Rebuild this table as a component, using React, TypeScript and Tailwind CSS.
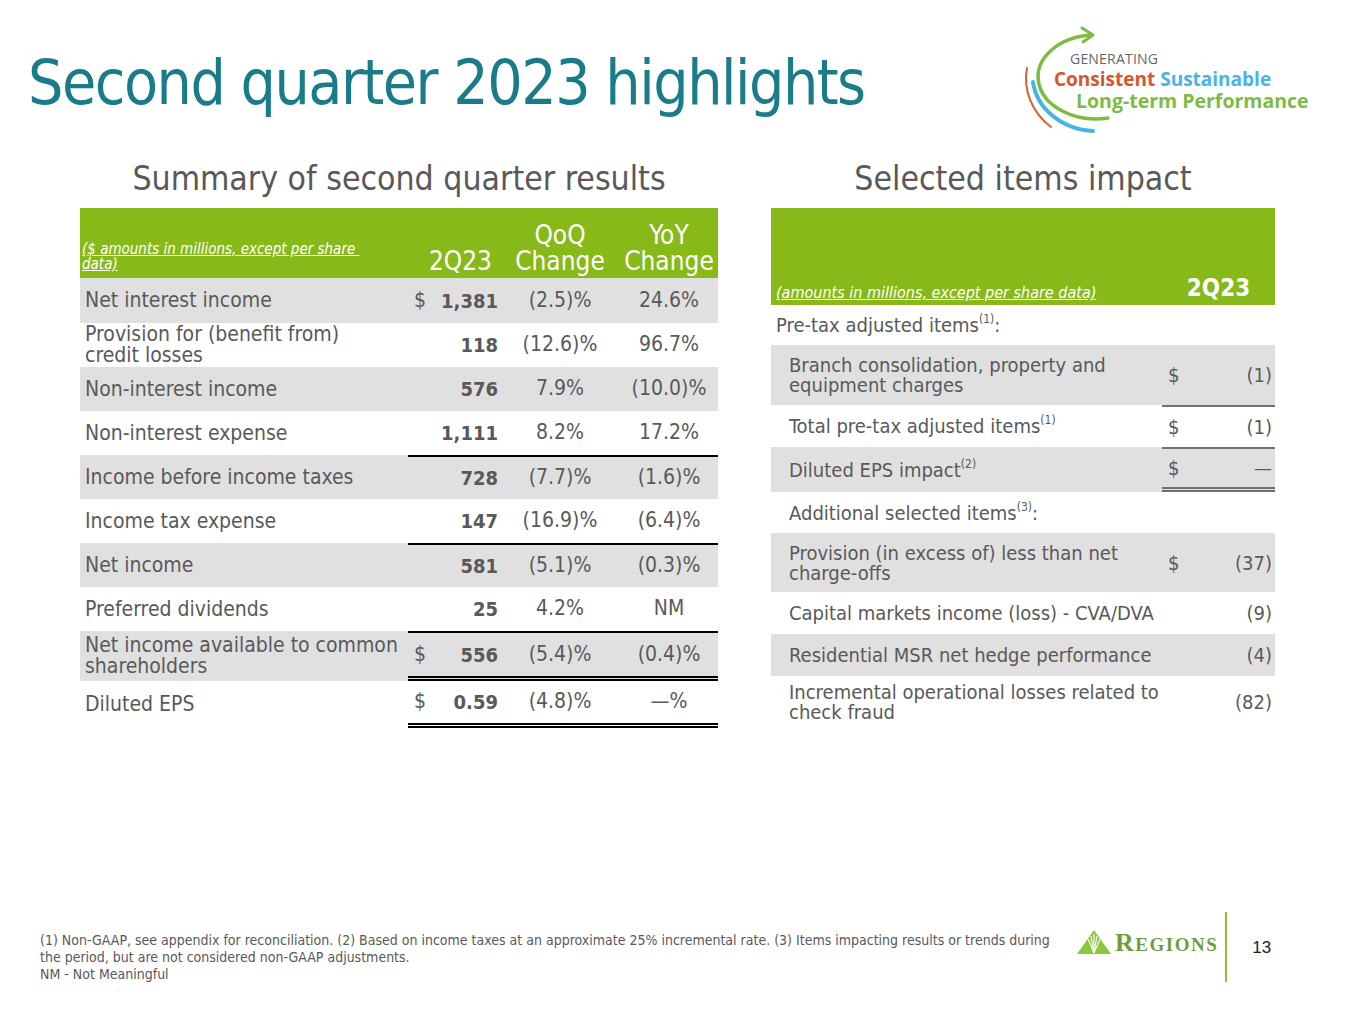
import React from "react";

const G = "text-[#595959]";

type LRow = {
  label: React.ReactNode;
  dollar?: boolean;
  v: string;
  q: string;
  y: string;
  gray: boolean;
  top?: boolean;
  dbl?: boolean;
  h: string;
};

const leftRows: LRow[] = [
  { label: "Net interest income", dollar: true, v: "1,381", q: "(2.5)%", y: "24.6%", gray: true, h: "h-[45px]" },
  { label: <>Provision for (benefit from)<br />credit losses</>, v: "118", q: "(12.6)%", y: "96.7%", gray: false, h: "h-[44px]" },
  { label: "Non-interest income", v: "576", q: "7.9%", y: "(10.0)%", gray: true, h: "h-[44px]" },
  { label: "Non-interest expense", v: "1,111", q: "8.2%", y: "17.2%", gray: false, h: "h-[44px]" },
  { label: "Income before income taxes", v: "728", q: "(7.7)%", y: "(1.6)%", gray: true, top: true, h: "h-[44px]" },
  { label: "Income tax expense", v: "147", q: "(16.9)%", y: "(6.4)%", gray: false, h: "h-[44px]" },
  { label: "Net income", v: "581", q: "(5.1)%", y: "(0.3)%", gray: true, top: true, h: "h-[44px]" },
  { label: "Preferred dividends", v: "25", q: "4.2%", y: "NM", gray: false, h: "h-[44px]" },
  { label: <>Net income available to common<br />shareholders</>, dollar: true, v: "556", q: "(5.4)%", y: "(0.4)%", gray: true, top: true, dbl: true, h: "h-[50px]" },
  { label: "Diluted EPS", dollar: true, v: "0.59", q: "(4.8)%", y: "—%", gray: false, dbl: true, h: "h-[47px]" },
];

function LeftTable() {
  return (
    <div className="w-[638px]">
      <div className="h-[70px] bg-[#87b919] flex items-end text-white">
        <div className="w-[328px] pl-[2px] pb-[6px] text-[15px] leading-[15px] italic underline">
          ($ amounts in millions, except per share&nbsp;<br />data)
        </div>
        <div className="w-[92px] text-right pr-[8px] text-[26px] leading-[26px] pb-[4px]">2Q23</div>
        <div className="w-[120px] text-center text-[26px] leading-[26px] pb-[4px]">
          QoQ<br />Change
        </div>
        <div className="w-[98px] text-center text-[26px] leading-[26px] pb-[4px]">
          YoY<br />Change
        </div>
      </div>
      {leftRows.map((r, i) => (
        <div key={i} className={`flex ${r.h} ${r.gray ? "bg-[#e0e0e0]" : "bg-white"}`}>
          <div className="w-[328px] pl-[5px] flex items-center text-[21px] leading-[21px]">
            <div>{r.label}</div>
          </div>
          <div
            className={`w-[310px] flex items-center text-[21px] ${r.top ? "border-t-2 border-black" : ""} ${
              r.dbl ? "border-b-[5px] border-double border-b-black" : ""
            }`}
          >
            <div className="w-[30px] pl-[6px]">{r.dollar ? "$" : ""}</div>
            <div className="w-[62px] text-right pr-[2px] font-bold text-[20px]">{r.v}</div>
            <div className="w-[120px] text-center">{r.q}</div>
            <div className="w-[98px] text-center">{r.y}</div>
          </div>
        </div>
      ))}
    </div>
  );
}

type RRow = {
  label: React.ReactNode;
  dollar?: boolean;
  v?: string;
  gray: boolean;
  top?: boolean;
  dbl?: boolean;
  h: string;
  indent?: boolean;
};

const Sup = ({ c }: { c: string }) => <sup className="text-[12px] top-[-9px]">{c}</sup>;

const rightRows: RRow[] = [
  { label: <>Pre-tax adjusted items<Sup c="(1)" />:</>, gray: false, h: "h-[40px]" },
  { label: <>Branch consolidation, property and<br />equipment charges</>, dollar: true, v: "(1)", gray: true, h: "h-[60px]", indent: true },
  { label: <>Total pre-tax adjusted items<Sup c="(1)" /></>, dollar: true, v: "(1)", gray: false, top: true, h: "h-[42px]", indent: true },
  { label: <>Diluted EPS impact<Sup c="(2)" /></>, dollar: true, v: "—", gray: true, top: true, dbl: true, h: "h-[45px]", indent: true },
  { label: <>Additional selected items<Sup c="(3)" />:</>, gray: false, h: "h-[41px]", indent: true },
  { label: <>Provision (in excess of) less than net<br />charge-offs</>, dollar: true, v: "(37)", gray: true, h: "h-[59px]", indent: true },
  { label: "Capital markets income (loss) - CVA/DVA", v: "(9)", gray: false, h: "h-[42px]", indent: true },
  { label: "Residential MSR net hedge performance", v: "(4)", gray: true, h: "h-[42px]", indent: true },
  { label: <>Incremental operational losses related to<br />check fraud</>, v: "(82)", gray: false, h: "h-[52px]", indent: true },
];

function RightTable() {
  return (
    <div className="w-[504px]">
      <div className="h-[97px] bg-[#87b919] flex items-end text-white">
        <div className="w-[391px] pl-[5px] pb-[4px] text-[16px] leading-[16px] italic underline">
          (amounts in millions, except per share data)
        </div>
        <div className="w-[113px] text-center text-[24px] font-bold leading-[26px] pb-[4px]">2Q23</div>
      </div>
      {rightRows.map((r, i) => (
        <div key={i} className={`flex ${r.h} ${r.gray ? "bg-[#e0e0e0]" : "bg-white"}`}>
          <div
            className={`w-[391px] ${r.indent ? "pl-[18px]" : "pl-[5px]"} flex items-center text-[20px] leading-[20px]`}
          >
            <div>{r.label}</div>
          </div>
          <div
            className={`w-[113px] flex items-center text-[20px] ${r.top ? "border-t-2 border-[#707070]" : ""} ${
              r.dbl ? "border-b-[5px] border-double border-b-[#707070]" : ""
            }`}
          >
            <div className="w-[38px] pl-[6px]">{r.dollar ? "$" : ""}</div>
            <div className="w-[75px] text-right pr-[3px]">{r.v}</div>
          </div>
        </div>
      ))}
    </div>
  );
}

function TopLogo() {
  return (
    <div className="relative w-[300px] h-[120px] font-['Open_Sans',sans-serif]">
      <svg className="absolute left-0 top-0" width="300" height="120" viewBox="1015 20 300 120">
        <path d="M1092,35 A58,42 0 1,0 1108,118" fill="none" stroke="#7dbb42" strokeWidth="3.5" strokeLinecap="round" />
        <path d="M1082,28 L1093,35 L1083,42" fill="none" stroke="#7dbb42" strokeWidth="3" strokeLinecap="round" strokeLinejoin="round" />
        <path d="M1033,82 A64,56 0 0,0 1093,131" fill="none" stroke="#45b6e3" strokeWidth="4" strokeLinecap="round" />
        <path d="M1027,68 A72,64 0 0,0 1051,127" fill="none" stroke="#d0603a" strokeWidth="2" strokeLinecap="round" />
      </svg>
      <div className="absolute left-[55px] top-[31px] text-[14px] leading-[16px] text-[#666666] tracking-[0.2px]">GENERATING</div>
      <div className="absolute left-[39px] top-[48px] text-[19px] leading-[22px] font-bold whitespace-nowrap">
        <span className="text-[#d4582d]">Consistent</span> <span className="text-[#47b5e2]">Sustainable</span>
      </div>
      <div className="absolute left-[61px] top-[70px] text-[19.5px] leading-[22px] font-bold whitespace-nowrap text-[#7dbb42]">
        Long-term Performance
      </div>
    </div>
  );
}

function RegionsLogo() {
  return (
    <div className="flex items-end gap-[4px]">
      <svg width="34" height="24" viewBox="0 0 34 24">
        <polygon points="17,0 34,24 0,24" fill="#8cc63f" />
        <g stroke="white" strokeWidth="1.1">
          <line x1="17" y1="23" x2="11" y2="9" />
          <line x1="17" y1="23" x2="14" y2="6" />
          <line x1="17" y1="23" x2="17" y2="4" />
          <line x1="17" y1="23" x2="20" y2="6" />
          <line x1="17" y1="23" x2="23" y2="9" />
        </g>
      </svg>
      <div className="font-['Liberation_Serif',serif] font-bold text-[#6e9e3c] tracking-[1.5px] leading-none mb-[-2px]">
        <span className="text-[26px]">R</span>
        <span className="text-[19px]">EGIONS</span>
      </div>
    </div>
  );
}

export default function App() {
  return (
    <div className={`w-[1365px] h-[1024px] bg-white relative overflow-hidden font-['DejaVu_Sans_Condensed',sans-serif] ${G}`}>
      <div className="flex justify-between items-start h-[159px]">
        <h1 className="pl-[28px] pt-[45px] text-[62px] leading-[76px] text-[#197c88] tracking-[-1.5px]">
          Second quarter 2023 highlights
        </h1>
        <div className="pt-[20px] pr-[50px]">
          <TopLogo />
        </div>
      </div>
      <div className="flex pl-[80px] gap-[53px]">
        <div className="flex flex-col items-center">
          <div className="text-[33.5px] leading-[40px] h-[49px] whitespace-nowrap">Summary of second quarter results</div>
          <LeftTable />
        </div>
        <div className="flex flex-col items-center">
          <div className="text-[33.5px] leading-[40px] h-[49px] whitespace-nowrap">Selected items impact</div>
          <RightTable />
        </div>
      </div>
      <div className="absolute left-0 bottom-0 w-full h-[112px] flex">
        <div className="w-[1060px] pl-[40px] pr-[4px] pt-[20px] text-[14px] leading-[17px]">
          (1) Non-GAAP, see appendix for reconciliation. (2) Based on income taxes at an approximate 25% incremental rate. (3) Items impacting results or trends during the period, but are not considered non-GAAP adjustments.
          <br />
          NM - Not Meaningful
        </div>
        <div className="pt-[18px] pl-[17px]">
          <RegionsLogo />
        </div>
        <div className="ml-[7px] w-[2px] h-[70px] bg-[#8cbe3f]" />
        <div className="pl-[25px] pt-[23px] font-['Liberation_Sans',sans-serif] text-[17px] text-[#222222]">13</div>
      </div>
    </div>
  );
}
